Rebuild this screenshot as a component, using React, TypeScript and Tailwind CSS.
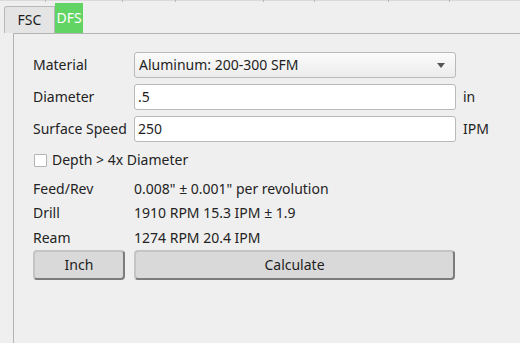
import React from 'react';

const font = { fontFamily: '"Noto Sans", "DejaVu Sans", sans-serif' };

const Field: React.FC<{ value: string }> = ({ value }) => (
  <div className="h-[26px] w-[322px] bg-white border border-[#b9b9b9] rounded-[3px] px-[3px] flex items-center text-[14px] leading-none text-[#1e1e1e]">
    {value}
  </div>
);

const App: React.FC = () => {
  const ticks = [45, 122, 175, 263, 314, 388, 449];
  return (
    <div className="w-[520px] h-[343px] bg-[#efefef] relative overflow-hidden text-[#232323] leading-none" style={font}>
      {/* header remnant */}
      <div className="h-[1px] bg-[#dadada] relative">
        {ticks.map(x => (
          <div key={x} className="absolute top-0 w-[1px] h-[2px] bg-[#b8b8b8]" style={{ left: x }} />
        ))}
      </div>

      {/* tabs */}
      <div className="flex items-end h-[32px] pl-[4px]">
        <div className="h-[27px] w-[51px] bg-[#e4e4e4] border border-b-0 border-[#b8b8b8] rounded-tl-[3px] flex items-center justify-center text-[14px] text-[#1c1c1c]">
          FSC
        </div>
        <div className="h-[30px] w-[28px] bg-[#62d463] flex items-center justify-center text-[14px] text-white">
          DFS
        </div>
      </div>

      {/* panel */}
      <div className="ml-[13px] border-l border-t border-[#b4b4b4] h-[310px] pl-[19px] pt-[18px]">
        <div className="flex flex-col gap-[6px]">
          <div className="flex items-center h-[26px]">
            <span className="w-[101px] text-[14px]">Material</span>
            <div className="h-[26px] w-[322px] rounded-[3px] border border-[#b9b9b9] bg-gradient-to-b from-[#fbfbfb] to-[#ececec] flex items-center justify-between px-[4px] text-[14px] text-[#1e1e1e]">
              <span>Aluminum: 200-300 SFM</span>
              <svg width="8" height="5" viewBox="0 0 8 5" className="mr-[6px]">
                <path d="M0 0 H8 L4 5 Z" fill="#555" />
              </svg>
            </div>
          </div>
          <div className="flex items-center h-[26px]">
            <span className="w-[101px] text-[14px]">Diameter</span>
            <Field value=".5" />
            <span className="ml-[7px] text-[14px]">in</span>
          </div>
          <div className="flex items-center h-[26px]">
            <span className="w-[101px] text-[14px] whitespace-nowrap">Surface Speed</span>
            <Field value="250" />
            <span className="ml-[7px] text-[14px]">IPM</span>
          </div>
        </div>

        <div className="flex items-center mt-[11px] h-[14px] ml-[1px]">
          <div className="w-[13px] h-[13px] bg-white border border-[#b4b4b4] rounded-[1px]" />
          <span className="ml-[5px] text-[14px]">Depth &gt; 4x Diameter</span>
        </div>

        <div className="mt-[10px] flex flex-col text-[14px]">
          <div className="flex h-[24px] items-center">
            <span className="w-[101px]">Feed/Rev</span>
            <span>0.008" ± 0.001" per revolution</span>
          </div>
          <div className="flex h-[24px] items-center">
            <span className="w-[101px]">Drill</span>
            <span>1910 RPM 15.3 IPM ± 1.9</span>
          </div>
          <div className="flex h-[25px] items-center">
            <span className="w-[101px]">Ream</span>
            <span>1274 RPM 20.4 IPM</span>
          </div>
        </div>

        <div className="flex gap-[9px] mt-[0px]">
          <button className="w-[92px] h-[30px] rounded-[4px] bg-[#d9d9d9] border-2 border-t-[#c4c4c4] border-l-[#c4c4c4] border-b-[#7c7c7c] border-r-[#7c7c7c] text-[14px] text-[#1e1e1e]">
            Inch
          </button>
          <button className="w-[321px] h-[30px] rounded-[4px] bg-[#d9d9d9] border-2 border-t-[#c4c4c4] border-l-[#c4c4c4] border-b-[#7c7c7c] border-r-[#7c7c7c] text-[14px] text-[#1e1e1e]">
            Calculate
          </button>
        </div>
      </div>
    </div>
  );
};

export default App;
